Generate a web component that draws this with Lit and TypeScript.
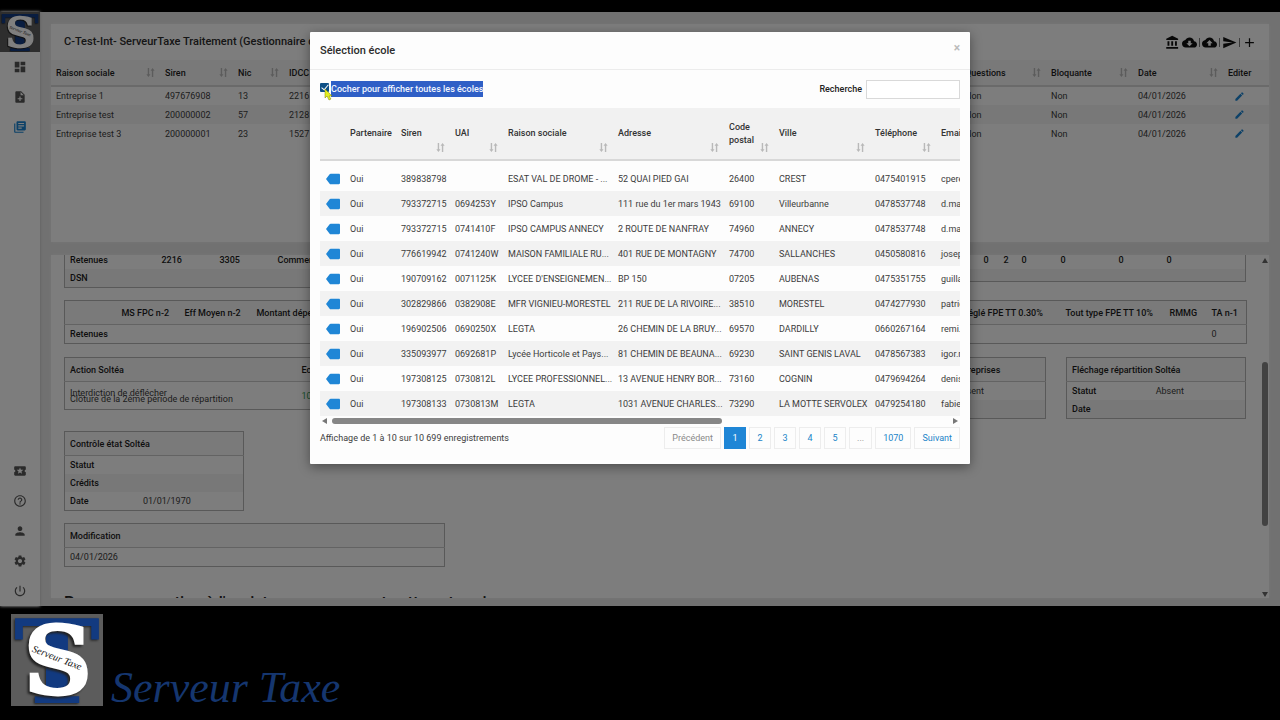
import { LitElement, html, css, svg } from "lit";
import { customElement, property, state } from "lit/decorators.js";

const ICONS: Record<string, string> = {
  dashboard: "M3 13h8V3H3v10zm0 8h8v-6H3v6zm10 0h8V11h-8v10zm0-18v6h8V3h-8z",
  noteAdd: "M14 2H6c-1.1 0-2 .9-2 2v16c0 1.100.9 2 2 2h12c1.100 0 2-.9 2-2V8l-6-6zm2 14h-3v3h-2v-3H8v-2h3v-3h2v3h3v2zm-3-7V3.500L18.500 9H13z",
  library: "M4 6H2v14c0 1.100.9 2 2 2h14v-2H4V6zm16-4H8c-1.100 0-2 .9-2 2v12c0 1.100.9 2 2 2h12c1.100 0 2-.9 2-2V4c0-1.100-.9-2-2-2zm-1 9H9V9h10v2zm-4 4H9v-2h6v2zm4-8H9V5h10v2z",
  ticket: "M20 12c0-1.100.9-2 2-2V6c0-1.100-.9-2-2-2H4c-1.100 0-2 .9-2 2v4c1.100 0 2 .9 2 2s-.9 2-2 2v4c0 1.100.9 2 2 2h16c1.100 0 2-.9 2-2v-4c-1.100 0-2-.9-2-2zm-4.420 4.800L12 14.500l-3.580 2.300 1.080-4.120-3.290-2.690 4.240-.25L12 5.800l1.540 3.950 4.240.25-3.290 2.690 1.090 4.110z",
  help: "M11 18h2v-2h-2v2zm1-16C6.480 2 2 6.480 2 12s4.480 10 10 10 10-4.480 10-10S17.520 2 12 2zm0 18c-4.410 0-8-3.590-8-8s3.590-8 8-8 8 3.590 8 8-3.590 8-8 8zm0-14c-2.210 0-4 1.790-4 4h2c0-1.100.9-2 2-2s2 .9 2 2c0 2-3 1.750-3 5h2c0-2.250 3-2.500 3-5 0-2.210-1.790-4-4-4z",
  person: "M12 12c2.210 0 4-1.790 4-4s-1.790-4-4-4-4 1.790-4 4 1.790 4 4 4zm0 2c-2.670 0-8 1.340-8 4v2h16v-2c0-2.660-5.330-4-8-4z",
  settings: "M19.140 12.940c.04-.3.06-.61.06-.94 0-.32-.02-.64-.07-.94l2.030-1.580c.18-.14.23-.41.12-.61l-1.920-3.320c-.12-.22-.37-.29-.59-.22l-2.390.96c-.5-.38-1.030-.7-1.620-.94l-.36-2.540c-.04-.24-.24-.41-.48-.41h-3.840c-.24 0-.43.17-.47.41l-.36 2.540c-.59.24-1.130.57-1.620.94l-2.390-.96c-.22-.08-.47 0-.59.22L2.740 8.870c-.12.21-.08.47.12.61l2.030 1.580c-.05.3-.09.63-.09.94s.02.64.07.94l-2.030 1.580c-.18.14-.23.41-.12.61l1.920 3.320c.12.22.37.29.59.22l2.390-.96c.5.38 1.030.7 1.620.94l.36 2.540c.05.24.24.41.48.41h3.840c.24 0 .44-.17.47-.41l.36-2.540c.59-.24 1.130-.56 1.620-.94l2.390.96c.22.08.47 0 .59-.22l1.920-3.320c.12-.22.07-.47-.12-.61l-2.010-1.580zM12 15.600c-1.980 0-3.600-1.620-3.600-3.600s1.620-3.600 3.600-3.600 3.600 1.620 3.600 3.600-1.620 3.600-3.600 3.600z",
  power: "M13 3h-2v10h2V3zm4.830 2.170l-1.420 1.420C17.990 7.860 19 9.810 19 12c0 3.870-3.130 7-7 7s-7-3.130-7-7c0-2.190 1.010-4.140 2.580-5.420L6.170 5.170C4.230 6.820 3 9.260 3 12c0 4.970 4.030 9 9 9s9-4.030 9-9c0-2.740-1.230-5.180-3.170-6.830z",
  bank: "M4 10v7h3v-7H4zm6 0v7h3v-7h-3zM2 22h19v-3H2v3zm14-12v7h3v-7h-3zm-4.500-9L2 6v2h19V6l-9.500-5z",
  cloudDown: "M19.350 10.040C18.670 6.590 15.640 4 12 4 9.110 4 6.600 5.640 5.350 8.040 2.340 8.360 0 10.910 0 14c0 3.310 2.690 6 6 6h13c2.760 0 5-2.240 5-5 0-2.640-2.050-4.780-4.650-4.960zM17 13l-5 5-5-5h3V9h4v4h3z",
  cloudUp: "M19.350 10.040C18.670 6.590 15.640 4 12 4 9.110 4 6.600 5.640 5.350 8.040 2.340 8.360 0 10.910 0 14c0 3.310 2.690 6 6 6h13c2.760 0 5-2.240 5-5 0-2.640-2.050-4.780-4.650-4.960zM14 13v4h-4v-4H7l5-5 5 5h-3z",
  send: "M2.010 21L23 12 2.010 3 2 10l15 2-15 2z",
  add: "M19 13h-6v6h-2v-6H5v-2h6V5h2v6h6v2z",
  edit: "M3 17.250V21h3.750L17.810 9.940l-3.750-3.750L3 17.250zM20.710 7.040c.39-.39.39-1.020 0-1.410l-2.340-2.340c-.39-.39-1.020-.39-1.410 0l-1.830 1.830 3.750 3.750 1.830-1.830z",
  label: "M24 5v14c0 1-.8 2-2 2H8c-.8 0-1.400-.4-1.800-1L0 12l6.200-8C6.600 3.400 7.200 3 8 3h14c1.200 0 2 1 2 2z",
  sort: "M6 2h3v14h3l-4.500 6L3 16h3zM15 22h3V8h3l-4.500-6L12 8h3z",
};

@customElement("st-icon")
class StIcon extends LitElement {
  @property() name = "";
  static styles = css`
    :host { display: inline-flex; width: 14px; height: 14px; flex: none; }
    svg { width: 100%; height: 100%; fill: currentColor; }
  `;
  render() {
    return html`<svg viewBox="0 0 24 24" aria-hidden="true">${svg`<path d=${ICONS[this.name]}></path>`}</svg>`;
  }
}

@customElement("st-logo")
class StLogo extends LitElement {
  static styles = css`
    :host { display: block; flex: none; }
    svg { display: block; width: 100%; height: 100%; }
    .t { font: bold 116px "DejaVu Serif", serif; fill: #123a80; filter: drop-shadow(-1px 1px 1px #222); }
    .s { font: bold 94px "DejaVu Serif", serif; fill: #fff; stroke: #fff; stroke-width: 3px; filter: drop-shadow(-2px 2px 1px #222); }
    .name { font: italic 10px "Liberation Serif", serif; fill: #111; }
  `;
  render() {
    return html`<svg viewBox="0 0 92 92" role="img" aria-label="Serveur Taxe">
      <rect width="92" height="92" fill="#5c5c5c"></rect>
      <text class="t" x="46" y="89" text-anchor="middle">T</text>
      <text class="s" x="47" y="80" text-anchor="middle">S</text>
      <text class="name" transform="rotate(21 46 44)" x="46" y="47" text-anchor="middle">Serveur Taxe</text>
    </svg>`;
  }
}

const COMPANIES = [
  ["Entreprise 1", "497676908", "13", "2216"],
  ["Entreprise test", "200000002", "57", "2128"],
  ["Entreprise test 3", "200000001", "23", "1527"],
];

const SCHOOLS = [
  ["389838798", "", "ESAT VAL DE DROME - ...", "52 QUAI PIED GAI", "26400", "CREST", "0475401915", "cperez"],
  ["793372715", "0694253Y", "IPSO Campus", "111 rue du 1er mars 1943", "69100", "Villeurbanne", "0478537748", "d.mar"],
  ["793372715", "0741410F", "IPSO CAMPUS ANNECY", "2 ROUTE DE NANFRAY", "74960", "ANNECY", "0478537748", "d.mar"],
  ["776619942", "0741240W", "MAISON FAMILIALE RU...", "401 RUE DE MONTAGNY", "74700", "SALLANCHES", "0450580816", "joseph"],
  ["190709162", "0071125K", "LYCEE D'ENSEIGNEMEN...", "BP 150", "07205", "AUBENAS", "0475351755", "guillau"],
  ["302829866", "0382908E", "MFR VIGNIEU-MORESTEL", "211 RUE DE LA RIVOIRE...", "38510", "MORESTEL", "0474277930", "patrici"],
  ["196902506", "0690250X", "LEGTA", "26 CHEMIN DE LA BRUY...", "69570", "DARDILLY", "0660267164", "remi.r"],
  ["335093977", "0692681P", "Lycée Horticole et Pays...", "81 CHEMIN DE BEAUNA...", "69230", "SAINT GENIS LAVAL", "0478567383", "igor.r"],
  ["197308125", "0730812L", "LYCEE PROFESSIONNEL...", "13 AVENUE HENRY BOR...", "73160", "COGNIN", "0479694264", "denis."],
  ["197308133", "0730813M", "LEGTA", "1031 AVENUE CHARLES...", "73290", "LA MOTTE SERVOLEX", "0479254180", "fabien"],
];

const HEADS = ["Siren", "UAI", "Raison sociale", "Adresse", "Code postal", "Ville", "Téléphone", "Email"];

@customElement("app-root")
class AppRoot extends LitElement {
  @state() private all = true;

  static styles = css`
    :host {
      display: flex; flex-direction: column; height: 100vh; overflow: hidden;
      background: #000; padding-top: 12px; box-sizing: border-box;
      font: 9px/18px Roboto, "Liberation Sans", sans-serif; color: #3c3c3c;
    }
    * { box-sizing: border-box; }
    button { font: inherit; color: inherit; background: none; border: 0; padding: 0; cursor: pointer; }
    table { border-collapse: collapse; table-layout: fixed; width: 100%; }
    th { text-align: left; font-weight: 500; color: #1c1c1c; }
    th, td { padding: 0 0 0 6px; white-space: nowrap; }
    .frame { position: relative; flex: 1; min-height: 0; display: flex; background: #e3e3e3; }

    .side { width: 40px; display: flex; flex-direction: column; background: #fafafa; color: #555; box-shadow: 0 0 3px #bbb; }
    .side st-logo { width: 40px; height: 40px; }
    .side button { height: 30px; display: flex; align-items: center; justify-content: center; }
    .side .active { color: #1a83d0; }
    .side .push { margin-top: auto; }

    .main { flex: 1; min-width: 0; display: flex; flex-direction: column; gap: 13px; padding: 12px 11px 8px; }
    .card { background: #fafafa; box-shadow: 0 0 2px #ececec; }
    .top { height: 218px; flex: none; }
    .bar { display: flex; justify-content: space-between; align-items: center; height: 36px; padding: 0 12px 0 13px; }
    .bar h1, .modal h2 { margin: 0; font-size: 11px; font-weight: 500; line-height: 18px; color: #2c2c2c; }
    .tools { display: flex; align-items: center; gap: 2px; color: #111; }
    .tools button { display: flex; }
    .tools st-icon { width: 15px; height: 15px; }
    .rule { width: 1px; height: 9px; background: #777; }
    .grid th { height: 26px; background: #f3f3f3; border-bottom: 2px solid #d4d4d4; }
    .grid td { height: 19px; color: #3c3c3c; }
    .grid th, .grid td { padding-left: 5px; }
    .grid tr:nth-child(even) td { background: #f1f1f1; }
    .head { display: flex; align-items: center; justify-content: space-between; padding-right: 4px; }
    .head st-icon, .sort st-icon { width: 11px; height: 11px; color: #b9b9b9; }
    .c109 { width: 109px; } .c73 { width: 73px; } .c51 { width: 51px; } .c90 { width: 90px; }
    .c86 { width: 86px; } .c87 { width: 87px; } .c46 { width: 46px; }
    .pen { color: #1a83d0; display: flex; margin-left: 6px; }
    .pen st-icon { width: 11px; height: 11px; }

    .bottom { flex: 1; min-height: 0; display: flex; }
    .scroll { flex: 1; min-width: 0; overflow: hidden; padding: 0 14px 0 13px; display: flex; flex-direction: column; }
    .scroll > * { flex: none; }
    .box { border: 1px solid #b2b2b2; }
    .box th, .box td { height: 18px; padding-left: 5px; }
    .box thead th { height: 24px; background: #f4f4f4; border-bottom: 1px solid #c6c6c6; }
    .box tbody tr:nth-child(even) > * { background: #f1f1f1; }
    .row { display: flex; align-items: flex-start; gap: 20px; }
    .first { gap: 0; margin-bottom: 12px; margin-top: -4px; }
    .first .box { border-top: 0; }
    .first th, .first td { font-weight: 500; color: #1c1c1c; }
    .first .rest { flex: 1; }
    .first .short td { height: 12px; }
    .lead { width: 400px; }
    .cards { margin-top: 13px; }
    .state, .mod { margin-top: 12px; }
    .grow { flex: 1; }
    .w180 { width: 180px; flex: none; }
    .w381 { width: 381px; }
    .box .lines { height: 28px; line-height: 6px; }
    .green { color: #2c9b50; }
    .ask { margin: 26px 0 0; font-size: 16px; font-weight: 500; line-height: 20px; color: #222; }
    .vbar { width: 9px; display: flex; flex-direction: column; align-items: center; padding: 3px 0 1px; }
    .vbar .space { flex: 3 1 0; }
    .vbar .thumb { flex: 5 1 0; width: 6px; border-radius: 3px; background: #858585; }
    .vbar .after { flex: 2 1 0; }
    .up, .down, .left, .right { width: 0; height: 0; border: 3px solid transparent; }
    .up { border-bottom: 5px solid #666; border-top: 0; }
    .down { border-top: 5px solid #666; border-bottom: 0; }
    .left { border-right: 5px solid #777; border-left: 0; }
    .right { border-left: 5px solid #777; border-right: 0; }

    .backdrop { position: absolute; inset: 0; background: rgba(0, 0, 0, 0.5); display: flex; justify-content: center; align-items: flex-start; padding-top: 20px; }
    .modal { width: 660px; max-width: 100%; background: #fdfdfd; border-radius: 1px; box-shadow: 0 3px 12px rgba(0, 0, 0, 0.4); }
    .modal header { display: flex; justify-content: space-between; align-items: center; height: 38px; padding: 0 10px; border-bottom: 1px solid #ececec; }
    .close { align-self: flex-start; padding-top: 7px; font-size: 12px; font-weight: 700; color: #bbb; }
    .body { padding: 10px 10px 14px; }
    .filter { display: flex; justify-content: space-between; align-items: center; height: 18px; font-weight: 500; color: #333; margin-bottom: 10px; }
    .check { position: relative; display: flex; align-items: flex-start; gap: 2px; line-height: 16px; }
    .check input { appearance: none; width: 9px; height: 9px; margin: 2px 0 0; background: #0d4f86; border-radius: 1px; display: grid; place-items: center; }
    .check input:checked::after { content: ""; width: 3px; height: 6px; border: solid #fff; border-width: 0 1px 1px 0; rotate: 40deg; translate: 0 -1px; }
    .check span { background: #2f5fc6; color: #f2f6ff; }
    .pointer { position: absolute; left: 4px; top: 8px; width: 9px; height: 12px; }
    .search { display: flex; align-items: center; gap: 4px; color: #222; }
    .search input { width: 94px; height: 19px; border: 1px solid #d9d9d9; background: #fff; font: inherit; padding: 0 4px; }
    .clip { overflow: hidden; }
    .schools { width: 1000px; }
    .schools th { height: 52px; background: #f1f1f1; border-bottom: 2px solid #d8d8d8; white-space: normal; line-height: 13px; color: #333; }
    .schools td { height: 25px; }
    .schools tbody tr:nth-child(odd) td { background: #f2f2f2; }
    .schools tbody tr.gap td { height: 6px; background: none; }
    .sort { position: relative; }
    .sort st-icon { position: absolute; right: 3px; bottom: 6px; }
    .tag { display: flex; color: #1f86d6; }
    .k24 { width: 24px; } .k54 { width: 54px; } .k53 { width: 53px; } .k110 { width: 110px; }
    .k111 { width: 111px; } .k50 { width: 50px; } .k96 { width: 96px; } .k66 { width: 66px; }
    .hbar { display: flex; align-items: center; height: 10px; padding: 0 2px; }
    .hbar .thumb { width: 390px; height: 6px; margin: 0 auto 0 5px; border-radius: 3px; background: #868686; }
    .foot { display: flex; justify-content: space-between; align-items: center; height: 24px; }
    .pages { display: flex; gap: 3px; }
    .pages button { min-width: 22px; height: 22px; padding: 0 7px; border: 1px solid #ededed; color: #1a83c8; line-height: 20px; }
    .pages .muted { color: #8a8a8a; }
    .pages .on { background: #1f86d6; border-color: #1f86d6; color: #fff; }

    .brand { height: 114px; flex: none; display: flex; align-items: flex-start; gap: 8px; padding: 8px 11px; }
    .brand st-logo { width: 92px; height: 92px; }
    .brand span { align-self: flex-end; font: italic 44px/48px "Liberation Serif", serif; color: #15366f; }
  `;

  private icon(name: string) {
    return html`<st-icon name=${name}></st-icon>`;
  }

  private sideButton(name: string, label: string, cls = "") {
    return html`<button class=${cls} aria-label=${label}>${this.icon(name)}</button>`;
  }

  private companies() {
    const head = (t: string) => html`<th><div class="head">${t}${this.icon("sort")}</div></th>`;
    return html`<table class="grid">
      <colgroup><col class="c109"><col class="c73"><col class="c51"><col><col class="c86"><col class="c87"><col class="c90"><col class="c46"></colgroup>
      <thead><tr>${["Raison sociale", "Siren", "Nic", "IDCC", "Questions", "Bloquante", "Date"].map(head)}<th>Editer</th></tr></thead>
      <tbody>${COMPANIES.map((c) => html`<tr>
        ${c.map((v) => html`<td>${v}</td>`)}<td>Non</td><td>Non</td><td>04/01/2026</td>
        <td><button class="pen" aria-label="Editer">${this.icon("edit")}</button></td></tr>`)}</tbody>
    </table>`;
  }

  private box(title: string, rows: string[][], keyWidth: number, cls = "w180") {
    return html`<table class="box ${cls}">
      <colgroup><col style="width:${keyWidth}%"><col></colgroup>
      <thead><tr><th colspan="2">${title}</th></tr></thead>
      <tbody>${rows.map(([k, v]) => html`<tr><th>${k}</th><td>${v}</td></tr>`)}</tbody>
    </table>`;
  }

  private details() {
    const widths = [52, 63, 72, 706, 103, 104, 42, 40];
    const heads = ["", "MS FPC n-2", "Eff Moyen n-2", "Montant dépensé", "Réglé FPE TT 0.30%", "Tout type FPE TT 10%", "RMMG", "TA n-1"];
    return html`<div class="scroll">
      <div class="row first">
        <table class="box lead">
          <colgroup><col style="width:92px"><col style="width:58px"><col style="width:58px"><col></colgroup>
          <tbody>
            <tr><th>Retenues</th><td>2216</td><td>3305</td><td>Commerce</td></tr>
            <tr><th>DSN</th><td></td><td></td><td></td></tr>
          </tbody>
        </table>
        <table class="box rest">
          <colgroup><col><col style="width:20px"><col style="width:18px"><col style="width:39px"><col style="width:58px"><col style="width:48px"><col style="width:84px"></colgroup>
          <tbody>
            <tr><td></td><td>0</td><td>2</td><td>0</td><td>0</td><td>0</td><td>0</td></tr>
            <tr class="short"><td colspan="7"></td></tr>
          </tbody>
        </table>
      </div>
      <table class="box">
        <colgroup>${widths.map((w) => html`<col style="width:${w}px">`)}</colgroup>
        <thead><tr>${heads.map((h) => html`<th>${h}</th>`)}</tr></thead>
        <tbody><tr><th>Retenues</th><td></td><td></td><td></td><td></td><td></td><td></td><td>0</td></tr></tbody>
      </table>
      <div class="row cards">
        <table class="box grow">
          <colgroup><col style="width:232px"><col></colgroup>
          <thead><tr><th>Action Soltéa</th><th>Ecoles</th></tr></thead>
          <tbody><tr><td class="lines">Interdiction de déflécher<br>Clôture de la 2ème période de répartition</td><td class="green">10</td></tr></tbody>
        </table>
        ${this.box("Fléchage répartition entreprises", [["Statut", "Absent"], ["Date", ""]], 47)}
        ${this.box("Fléchage répartition Soltéa", [["Statut", "Absent"], ["Date", ""]], 47)}
      </div>
      ${this.box("Contrôle état Soltéa", [["Statut", ""], ["Crédits", ""], ["Date", "01/01/1970"]], 41, "w180 state")}
      <table class="box w381 mod">
        <thead><tr><th>Modification</th></tr></thead>
        <tbody><tr><td>04/01/2026</td></tr></tbody>
      </table>
      <h3 class="ask">Poser une question à l'assistance concernant cette entreprise</h3>
    </div>`;
  }

  private modal() {
    return html`<section class="modal" role="dialog" aria-label="Sélection école">
      <header><h2>Sélection école</h2><button class="close" aria-label="Fermer">×</button></header>
      <div class="body">
        <div class="filter">
          <label class="check">
            <input type="checkbox" .checked=${this.all} @change=${() => (this.all = !this.all)}>
            <span>Cocher pour afficher toutes les écoles</span>
            <svg class="pointer" viewBox="0 0 9 12" aria-hidden="true"><path d="M1 0v9l2-2 2 4 2-1-2-3h3z" fill="#e2ee20" stroke="#7d8600" stroke-width=".5"></path></svg>
          </label>
          <label class="search">Recherche <input type="text"></label>
        </div>
        <div class="clip">
          <table class="schools">
            <colgroup><col class="k24"><col class="c51"><col class="k54"><col class="k53"><col class="k110"><col class="k111"><col class="k50"><col class="k96"><col class="k66"><col></colgroup>
            <thead><tr><th></th><th>Partenaire</th>${HEADS.map((h) => html`<th class="sort">${h}${this.icon("sort")}</th>`)}</tr></thead>
            <tbody>
              <tr class="gap"><td colspan="10"></td></tr>
              ${SCHOOLS.map((s) => html`<tr><td><button class="tag" aria-label="Choisir">${this.icon("label")}</button></td><td>Oui</td>${s.map((v) => html`<td>${v}</td>`)}</tr>`)}
            </tbody>
          </table>
        </div>
        <div class="hbar"><i class="left"></i><i class="thumb"></i><i class="right"></i></div>
        <div class="foot">
          <span>Affichage de 1 à 10 sur 10 699 enregistrements</span>
          <nav class="pages">
            ${["Précédent", "1", "2", "3", "4", "5", "...", "1070", "Suivant"].map((p) => html`<button class=${p === "1" ? "on" : p === "Précédent" || p === "..." ? "muted" : ""}>${p}</button>`)}
          </nav>
        </div>
      </div>
    </section>`;
  }

  render() {
    return html`
      <div class="frame">
        <nav class="side">
          <st-logo></st-logo>
          ${this.sideButton("dashboard", "Tableau de bord")}
          ${this.sideButton("noteAdd", "Nouveau")}
          ${this.sideButton("library", "Dossiers", "active")}
          ${this.sideButton("ticket", "Tickets", "push")}
          ${this.sideButton("help", "Aide")}
          ${this.sideButton("person", "Compte")}
          ${this.sideButton("settings", "Paramètres")}
          ${this.sideButton("power", "Déconnexion")}
        </nav>
        <main class="main">
          <section class="card top">
            <div class="bar">
              <h1>C-Test-Int- ServeurTaxe Traitement (Gestionnaire de paie)</h1>
              <div class="tools">
                <button aria-label="Banque">${this.icon("bank")}</button>
                <button aria-label="Télécharger">${this.icon("cloudDown")}</button><i class="rule"></i>
                <button aria-label="Importer">${this.icon("cloudUp")}</button><i class="rule"></i>
                <button aria-label="Envoyer">${this.icon("send")}</button><i class="rule"></i>
                <button aria-label="Ajouter">${this.icon("add")}</button>
              </div>
            </div>
            ${this.companies()}
          </section>
          <section class="card bottom">
            ${this.details()}
            <div class="vbar"><i class="up"></i><i class="space"></i><i class="thumb"></i><i class="after"></i><i class="down"></i></div>
          </section>
        </main>
        <div class="backdrop">${this.modal()}</div>
      </div>
      <footer class="brand"><st-logo></st-logo><span>Serveur Taxe</span></footer>
    `;
  }
}
